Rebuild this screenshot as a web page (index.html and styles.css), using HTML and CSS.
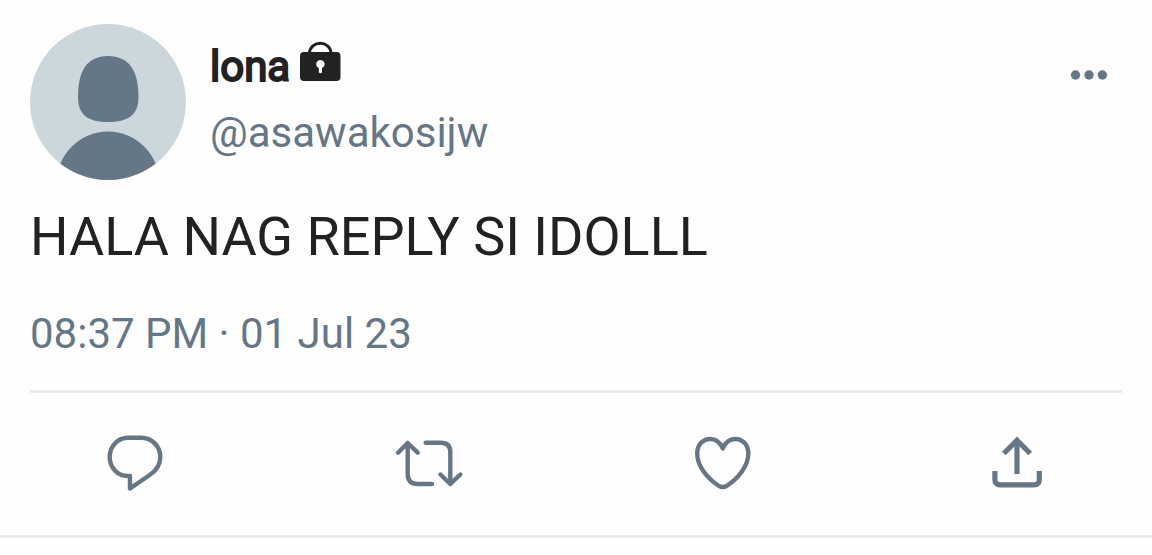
FILE: index.html
```html
<!DOCTYPE html>

<html lang="tl">

<head>
	<meta charset="UTF-8" />
	<meta name="viewport" content="width=device-width, initial-scale=1" />
	<title>lona (@asawakosijw)</title>
	<link rel="stylesheet" href="styles.css">
</head>

<body>
	<article class="tweet">
		<header class="author">
			<svg class="avatar" viewBox="0 0 156 156" aria-hidden="true">
				<clipPath id="round"><circle cx="78" cy="78" r="78" /></clipPath>
				<g clip-path="url(#round)">
					<rect class="avatar-back" width="156" height="156" />
					<path d="M78 32C100 32 108.500 48 108.500 73C108.500 91 98 98 78 98S48 91 48 73C48 48 56 32 78 32Z" />
					<circle cx="78" cy="159" r="51.400" />
				</g>
			</svg>
			<div class="names">
				<div class="name">
					<span>lona</span>
					<svg class="lock" viewBox="0 0 42 42" aria-hidden="true">
						<path class="shackle" d="M9.500 14V12.500A10.800 10.300 0 0 1 31 12.500V14" />
						<rect y="12" width="40.500" height="29" rx="4" />
						<path class="keyhole" d="M18.800 32.500V28A4.200 4.200 0 1 1 22 28V32.500Q20.400 34 18.800 32.500Z" />
					</svg>
				</div>
				<a class="handle" href="#">@asawakosijw</a>
			</div>
			<button class="icon-button more" type="button" aria-label="More">
				<svg viewBox="0 0 66 66">
					<circle cx="19.500" cy="33" r="4.700" />
					<circle cx="33" cy="33" r="4.700" />
					<circle cx="46.400" cy="33" r="4.700" />
				</svg>
			</button>
		</header>

		<p class="text">HALA NAG REPLY SI IDOLLL</p>

		<time class="date" datetime="2023-07-01T20:37">08:37 PM · 01 Jul 23</time>

		<div class="actions">
			<button class="icon-button action" type="button" aria-label="Reply">
				<svg viewBox="0 0 72 72" stroke-width="4.400">
					<path d="M31 49H29C18.500 49 10.700 40.500 10.700 30S18.500 10.700 29 10.700H42C53 10.700 61.300 19.500 61.300 30C61.300 38 57 44 50 48.500L31 61.500Z" />
				</svg>
			</button>
			<button class="icon-button action" type="button" aria-label="Retweet">
				<svg viewBox="0 0 72 72" stroke-width="4.400">
					<path d="M5 25.700L14.700 16L24.700 25.700M14.700 16V47Q14.700 57 24.700 57H39" />
					<path d="M32.700 15.700H48Q57.300 15.700 57.300 25V57M47.500 47.500L57.300 57L67.300 47.500" />
				</svg>
			</button>
			<button class="icon-button action" type="button" aria-label="Like">
				<svg viewBox="0 0 72 72" stroke-width="4.400">
					<path d="M35.800 21.500C33 15 29 12 23.500 12C15.500 12 10.200 18 10.200 26.500C10.200 39 20 51 32 59Q35.800 61 39.600 59C51.500 51 61.300 39 61.300 26.500C61.300 18 56 12 48 12C42.500 12 38.500 15 35.800 21.500Z" />
				</svg>
			</button>
			<button class="icon-button action share" type="button" aria-label="Share">
				<svg viewBox="0 0 72 72" stroke-width="5.200">
					<path d="M36 47V13M22.800 26.500L36 13.300L49.200 26.500" />
					<path d="M13.900 44V52.500Q13.900 57.800 19.200 57.800H53Q58.300 57.800 58.300 52.500V44" />
				</svg>
			</button>
		</div>
	</article>
</body>

</html>
```

FILE: styles.css
```css
body {
	margin: 0;
	font-family: Roboto, sans-serif;
	font-size: 42px;
	line-height: 66px;
	color: #222;
	background-color: #fefefe;
}

.tweet {
	padding: 24px 30px 36px;
	border-bottom: 3px solid #eaebeb;
}

.author {
	display: flex;
	align-items: flex-start;
	gap: 24px;
}

.avatar {
	flex: none;
	width: 156px;
	height: 156px;
	fill: #657786;
}

.avatar-back {
	fill: #ccd7db;
}

.names {
	flex: 1;
	padding-top: 10px;
}

.name {
	display: flex;
	gap: 10px;
	-webkit-text-stroke: 2px #222;
}

.lock {
	width: 42px;
	height: 42px;
	margin-top: 6px;
	fill: #222;
}

.shackle {
	fill: none;
	stroke: #222;
	stroke-width: 3;
}

.keyhole {
	fill: #fefefe;
}

.handle {
	display: block;
	color: #657786;
	text-decoration: none;
}

.icon-button {
	flex: none;
	padding: 0;
	border: 0;
	background: none;
	cursor: pointer;
}

.icon-button svg {
	display: block;
}

.more {
	width: 66px;
	margin-top: 18px;
	fill: #657786;
}

.text {
	margin: 21px 0 28px;
	font-size: 54px;
	line-height: 72px;
}

.date {
	display: block;
	color: #657786;
}

.actions {
	display: flex;
	justify-content: space-between;
	margin-top: 23px;
	padding: 34px 69px 0;
	border-top: 3px solid #eaebeb;
}

.action {
	width: 72px;
	fill: none;
	stroke: #657786;
	stroke-linecap: round;
	stroke-linejoin: round;
}

.share {
	stroke-linecap: butt;
	stroke-linejoin: miter;
}
```
